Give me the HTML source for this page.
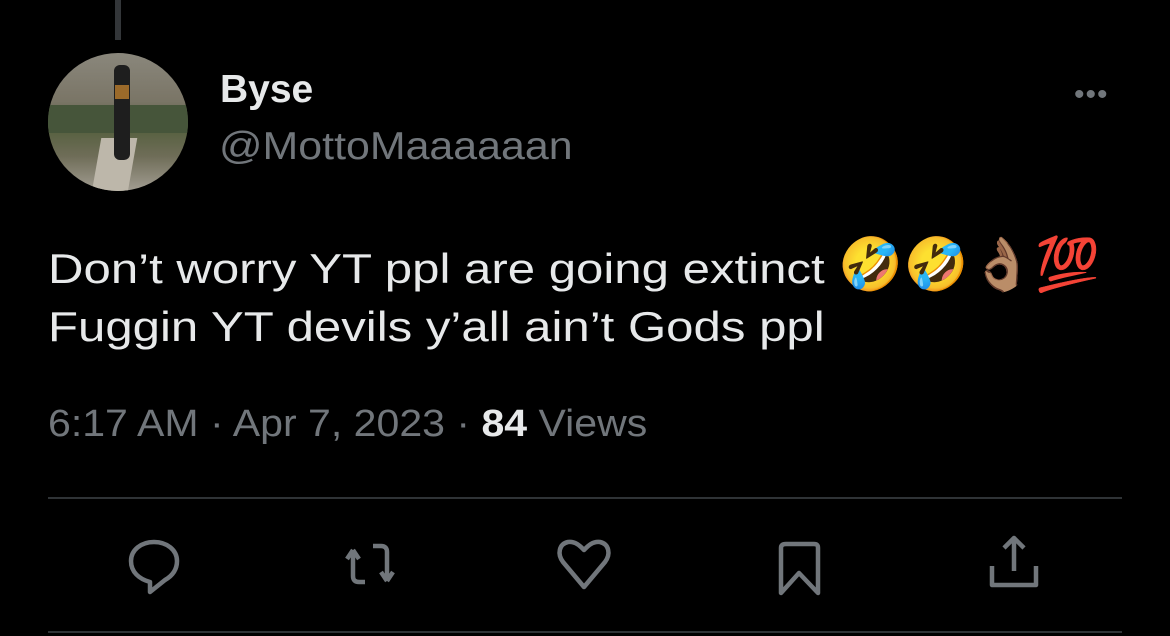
<!DOCTYPE html>
<html><head><meta charset="utf-8"><style>
html,body{margin:0;padding:0;background:#000;width:1170px;height:636px;overflow:hidden;font-family:"Liberation Sans",sans-serif}
.abs{position:absolute;white-space:nowrap}
.sx{display:inline-block;transform-origin:0 50%}
</style></head><body>
<div class="abs" style="left:115px;top:0;width:6px;height:40px;background:#333639"></div>
<div class="abs" style="left:48px;top:53px;width:140px;height:138px;border-radius:50%;overflow:hidden;background:linear-gradient(180deg,#8a877c 0%,#7a7566 35%,#56603f 55%,#6f6d58 75%,#a29d92 100%)">
 <div class="abs" style="left:0;top:52px;width:140px;height:28px;background:#46553a"></div>
 <div class="abs" style="left:48px;top:85px;width:36px;height:60px;background:#bdb7aa;transform:skewX(-10deg)"></div>
 <div class="abs" style="left:66px;top:12px;width:16px;height:95px;background:#1e1e1e;border-radius:6px"></div>
 <div class="abs" style="left:67px;top:32px;width:14px;height:14px;background:#9b6a2a"></div>
</div>
<div class="abs" style="left:220px;top:68px;font-size:39px;font-weight:bold;color:#e7e9ea">Byse</div>
<div class="abs" style="left:219px;top:125px;font-size:39px;color:#71767b"><span class="sx" style="transform:scaleX(1.1)">@MottoMaaaaaan</span></div>
<div class="abs" style="left:1074px;top:78px;color:#71767b;font-size:30px;letter-spacing:1px">•••</div>
<div class="abs" style="left:48px;top:240px;font-size:42px;line-height:58px;color:#e7e9ea"><span class="sx" style="transform:scaleX(1.17)">Don’t worry YT ppl are going extinct</span></div>
<div class="abs" style="left:838px;top:236px;font-size:52px;line-height:58px;font-family:'DejaVu Sans',sans-serif;letter-spacing:1px">🤣🤣👌🏽💯</div>
<div class="abs" style="left:48px;top:298px;font-size:42px;line-height:58px;color:#e7e9ea"><span class="sx" style="transform:scaleX(1.17)">Fuggin YT devils y’all ain’t Gods ppl</span></div>
<div class="abs" style="left:48px;top:403px;font-size:38px;color:#71767b"><span class="sx" style="transform:scaleX(1.08)">6:17 AM · Apr 7, 2023 · <b style="color:#e7e9ea">84</b> Views</span></div>
<div class="abs" style="left:48px;top:497px;width:1074px;height:2px;background:#2f3336"></div>
<div class="abs" style="left:48px;top:631px;width:1074px;height:2px;background:#2f3336"></div>
<svg class="abs" style="left:0;top:530px" width="1170" height="70" fill="none" stroke="#71767b" stroke-width="4.5" stroke-linejoin="round">
 <path d="M150 62 L150 52 C139 49 131 42 131 31 C131 20 141 12 154 12 C167 12 177 20 177 31 C177 40 172 46 165 50 Z"/>
 <path d="M353 20 L347 29 M353 20 L359 29 M353 20 L353 46 C353 50 355 52 359 52 L365 52"/>
 <path d="M373 16 L381 16 C385 16 387 18 387 22 L387 50 M387 51 L381 42 M387 51 L393 42"/>
 <path d="M584 57 L563 32 C557 24 559 14 568 12 C576 11 581 17 584 20 C587 17 592 11 600 12 C609 14 611 24 605 32 Z"/>
 <path d="M781 63 L781 18 C781 15 783 14 786 14 L814 14 C817 14 818 15 818 18 L818 63 L799 43 Z"/>
 <path d="M1014 8 L1014 41 M1004 18 L1014 8 L1024 18 M992 36 L992 55 L1036 55 L1036 36"/>
</svg>
</body></html>
